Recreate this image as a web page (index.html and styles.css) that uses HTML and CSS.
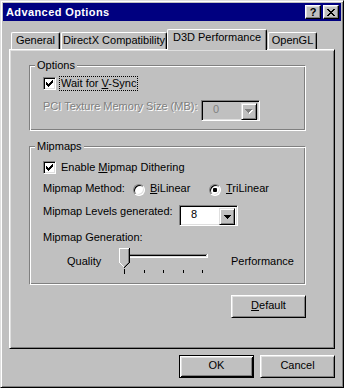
FILE: index.html
```html
<!DOCTYPE html>
<html lang="en">
<head>
<meta charset="utf-8">
<title>Advanced Options</title>
<link rel="stylesheet" href="styles.css">
</head>
<body>
<div class="window">
  <div class="titlebar">
    <span class="title">Advanced Options</span>
    <div class="cap-btns">
      <div class="cap-btn help">?</div>
      <div class="cap-btn close">
        <svg width="8" height="7" viewBox="0 0 8 7" shape-rendering="crispEdges"><path d="M0 0h2v1h-2zM6 0h2v1h-2zM1 1h2v1h-2zM5 1h2v1h-2zM2 2h4v1h-4zM3 3h2v1h-2zM2 4h4v1h-4zM1 5h2v1h-2zM5 5h2v1h-2zM0 6h2v1h-2zM6 6h2v1h-2z"/></svg>
      </div>
    </div>
  </div>

  <div class="tabs">
    <div class="tab tab-general">General</div>
    <div class="tab tab-dx">DirectX Compatibility</div>
    <div class="tab tab-d3d active">D3D Performance</div>
    <div class="tab tab-ogl">OpenGL</div>
  </div>

  <div class="panel">
    <div class="panel-body">
      <div class="group group-options">
        <span class="group-label">Options</span>
        <div class="check-row row-vsync">
          <span class="checkbox"><svg width="7" height="7" viewBox="0 0 7 7" shape-rendering="crispEdges"><path d="M0 2h1v3h-1zM1 3h1v3h-1zM2 4h1v3h-1zM3 3h1v3h-1zM4 2h1v3h-1zM5 1h1v3h-1zM6 0h1v3h-1z"/></svg></span>
          <span class="check-label focus">Wait for <u>V</u>-Sync</span>
        </div>
        <div class="field-row row-pci">
          <span class="field-label label-pci disabled">PCI Texture Memory Size (MB):</span>
          <div class="combo combo-pci is-disabled">
            <span class="combo-val">0</span>
            <span class="combo-btn"><svg width="8" height="5" viewBox="0 0 8 5" shape-rendering="crispEdges"><path class="arrow-shadow" d="M1 1h7v1h-7zM2 2h5v1h-5zM3 3h3v1h-3zM4 4h1v1h-1z"/><path class="arrow-gray" d="M0 0h7v1h-7zM1 1h5v1h-5zM2 2h3v1h-3zM3 3h1v1h-1z"/></svg></span>
          </div>
        </div>
      </div>

      <div class="group group-mip">
        <span class="group-label">Mipmaps</span>
        <div class="check-row row-dither">
          <span class="checkbox"><svg width="7" height="7" viewBox="0 0 7 7" shape-rendering="crispEdges"><path d="M0 2h1v3h-1zM1 3h1v3h-1zM2 4h1v3h-1zM3 3h1v3h-1zM4 2h1v3h-1zM5 1h1v3h-1zM6 0h1v3h-1z"/></svg></span>
          <span class="check-label">Enable <u>M</u>ipmap Dithering</span>
        </div>
        <div class="field-row row-method">
          <span class="field-label label-method">Mipmap Method:</span>
          <span class="radio-opt opt-bi"><span class="radio"></span><span class="radio-label"><u>B</u>iLinear</span></span>
          <span class="radio-opt opt-tri"><span class="radio"><span class="dot"></span></span><span class="radio-label"><u>T</u>riLinear</span></span>
        </div>
        <div class="field-row row-levels">
          <span class="field-label label-levels">Mipmap Levels generated:</span>
          <div class="combo combo-levels">
            <span class="combo-val">8</span>
            <span class="combo-btn"><svg width="7" height="4" viewBox="0 0 7 4" shape-rendering="crispEdges"><path d="M0 0h7v1h-7zM1 1h5v1h-5zM2 2h3v1h-3zM3 3h1v1h-1z"/></svg></span>
          </div>
        </div>
        <div class="row-gen">Mipmap Generation:</div>
        <div class="slider-row">
          <span class="slider-end end-quality">Quality</span>
          <svg class="trackbar" width="90" height="27" viewBox="0 0 90 27" shape-rendering="crispEdges">
            <rect x="2" y="7" width="86" height="1" fill="#808080"/>
            <rect x="2" y="8" width="85" height="1" fill="#000"/>
            <rect x="2" y="9" width="85" height="1" fill="#dfdfdf"/>
            <rect x="2" y="10" width="87" height="1" fill="#fff"/>
            <rect x="88" y="7" width="1" height="4" fill="#fff"/>
            <rect x="87" y="8" width="1" height="2" fill="#dfdfdf"/>
            <rect x="0" y="1" width="11" height="15" fill="#c0c0c0"/>
            <rect x="0" y="1" width="10" height="1" fill="#fff"/>
            <rect x="0" y="1" width="1" height="15" fill="#fff"/>
            <rect x="10" y="1" width="1" height="15" fill="#000"/>
            <rect x="9" y="2" width="1" height="14" fill="#808080"/>
            <rect x="1" y="16" width="1" height="1" fill="#fff"/>
            <rect x="2" y="16" width="6" height="1" fill="#c0c0c0"/>
            <rect x="8" y="16" width="1" height="1" fill="#808080"/>
            <rect x="9" y="16" width="1" height="1" fill="#000"/>
            <rect x="2" y="17" width="1" height="1" fill="#fff"/>
            <rect x="3" y="17" width="4" height="1" fill="#c0c0c0"/>
            <rect x="7" y="17" width="1" height="1" fill="#808080"/>
            <rect x="8" y="17" width="1" height="1" fill="#000"/>
            <rect x="3" y="18" width="1" height="1" fill="#fff"/>
            <rect x="4" y="18" width="2" height="1" fill="#c0c0c0"/>
            <rect x="6" y="18" width="1" height="1" fill="#808080"/>
            <rect x="7" y="18" width="1" height="1" fill="#000"/>
            <rect x="4" y="19" width="1" height="1" fill="#fff"/>
            <rect x="5" y="19" width="1" height="1" fill="#808080"/>
            <rect x="6" y="19" width="1" height="1" fill="#000"/>
            <rect x="5" y="20" width="1" height="1" fill="#000"/>
            <rect x="5" y="22" width="1" height="5" fill="#000"/>
            <rect x="25" y="23" width="1" height="3" fill="#000"/>
            <rect x="44" y="23" width="1" height="3" fill="#000"/>
            <rect x="64" y="23" width="1" height="3" fill="#000"/>
            <rect x="83" y="23" width="1" height="3" fill="#000"/>
          </svg>
          <span class="slider-end end-perf">Performance</span>
        </div>
      </div>

      <div class="btn btn-default"><u>D</u>efault</div>
    </div>
  </div>

  <div class="footer">
    <div class="btn btn-ok">OK</div>
    <div class="btn">Cancel</div>
  </div>
</div>
</body>
</html>
```

FILE: styles.css
```css
* { box-sizing: border-box; }
html, body { margin: 0; padding: 0; }
body {
  width: 344px;
  height: 388px;
  overflow: hidden;
  background: #c0c0c0;
  font-family: "Liberation Sans", Arial, sans-serif;
  font-size: 11px;
  line-height: 13px;
  color: #000;
}
u { text-decoration-thickness: 1px; text-underline-offset: 1px; }

.window {
  width: 344px;
  height: 388px;
  display: flex;
  flex-direction: column;
  padding: 2px;
  border: 1px solid;
  border-color: #dfdfdf #000 #000 #dfdfdf;
  box-shadow: inset 1px 1px #fff, inset -1px -1px #808080;
  background: #c0c0c0;
}

.titlebar {
  flex: none;
  height: 18px;
  display: flex;
  align-items: center;
  padding: 0 2px 0 3px;
  background: #000080;
  color: #fff;
}
.title { flex: 1; font-weight: bold; letter-spacing: 0.4px; white-space: nowrap; }
.cap-btns { display: flex; gap: 2px; }
.cap-btn {
  width: 16px;
  height: 14px;
  display: flex;
  align-items: center;
  justify-content: center;
  background: #c0c0c0;
  color: #000;
  border: 1px solid;
  border-color: #fff #000 #000 #fff;
  box-shadow: inset -1px -1px #808080, inset 1px 1px #dfdfdf;
}
.cap-btn.help { font-weight: bold; font-size: 11px; line-height: 12px; }
.cap-btn svg { display: block; fill: #000; }

.tabs {
  flex: none;
  display: flex;
  align-items: flex-end;
  height: 20px;
  margin-top: 8px;
  padding-left: 8px;
}
.tab {
  height: 17px;
  padding-top: 1px;
  text-align: center;
  white-space: nowrap;
  background: #c0c0c0;
  border-top: 1px solid #fff;
  border-left: 1px solid #fff;
  border-right: 1px solid #000;
  border-radius: 2px 2px 0 0;
  box-shadow: inset -1px 0 #808080;
}
.tab-general { width: 49px; }
.tab-dx { width: 106px; margin-left: 1px; }
.tab-d3d { width: 100px; }
.tab-ogl { width: 49px; margin-left: 1px; }
.tab.active {
  height: 21px;
  margin-bottom: -1px;
  position: relative;
  z-index: 1;
}

.panel {
  flex: none;
  width: 326px;
  height: 300px;
  margin-left: 6px;
  padding: 15px 0 0 19px;
  border: 1px solid;
  border-color: #fff #000 #000 #fff;
  box-shadow: inset 1px 1px #dfdfdf, inset -1px -1px #808080;
}
.panel-body { width: 277px; display: flex; flex-direction: column; }

.group {
  display: flex;
  flex-direction: column;
  align-items: flex-start;
  padding: 0 0 9px 13px;
  border: 1px solid;
  border-color: #808080 #fff #fff #808080;
  box-shadow: inset 1px 1px #fff, inset -1px -1px #808080;
}
.group-mip { margin-top: 15px; padding-bottom: 10px; }
.group-label {
  margin: -7px 0 0 -8px;
  padding: 0 2px;
  background: #c0c0c0;
}

.check-row { display: flex; align-items: center; height: 13px; }
.row-vsync { margin-top: 5px; }
.row-dither { margin-top: 8px; }
.checkbox {
  flex: none;
  width: 13px;
  height: 13px;
  display: flex;
  align-items: center;
  justify-content: center;
  background: #fff;
  border: 1px solid;
  border-color: #808080 #fff #fff #808080;
  box-shadow: inset 1px 1px #000, inset -1px -1px #dfdfdf;
}
.checkbox svg { display: block; fill: #000; }
.check-label { margin-left: 4px; padding: 0 1px; }
.focus { outline: 1px dotted #000; }

.field-row { display: flex; align-items: flex-start; }
.row-pci { margin-top: 10px; }
.row-method { margin-top: 8px; }
.row-levels { margin-top: 9px; }
.field-label { flex: none; white-space: nowrap; }
.label-pci { width: 158px; }
.label-method { width: 90px; }
.label-levels { width: 136px; }
.disabled { color: #808080; text-shadow: 1px 1px #fff; }

.radio-opt { display: flex; align-items: flex-start; }
.opt-bi { width: 76px; }
.radio {
  flex: none;
  width: 12px;
  height: 12px;
  margin-top: 2px;
  display: flex;
  align-items: center;
  justify-content: center;
  border-radius: 50%;
  background: #fff;
  border: 1px solid;
  border-color: #808080 #fff #fff #808080;
  box-shadow: inset 1px 1px #000, inset -1px -1px #dfdfdf;
}
.dot { width: 4px; height: 4px; border-radius: 1px; background: #000; }
.radio-label { margin-left: 5px; }

.combo {
  flex: none;
  width: 59px;
  height: 21px;
  display: flex;
  padding: 2px;
  background: #fff;
  border: 1px solid;
  border-color: #808080 #fff #fff #808080;
  box-shadow: inset 1px 1px #000, inset -1px -1px #dfdfdf;
}
.combo.is-disabled { background: #c0c0c0; color: #808080; }
.combo-val { flex: 1; padding-left: 9px; }
.combo-btn {
  flex: none;
  width: 16px;
  height: 17px;
  display: flex;
  align-items: center;
  justify-content: center;
  background: #c0c0c0;
  border: 1px solid;
  border-color: #dfdfdf #000 #000 #dfdfdf;
  box-shadow: inset 1px 1px #fff, inset -1px -1px #808080;
}
.combo-btn svg { display: block; fill: #000; }
.combo-btn .arrow-shadow { fill: #fff; }
.combo-btn .arrow-gray { fill: #808080; }

.row-gen { margin-top: 5px; }
.slider-row { display: flex; align-items: flex-start; margin-top: 3px; }
.end-quality { flex: none; width: 52px; margin-left: 24px; margin-top: 8px; }
.trackbar { display: block; flex: none; }
.end-perf { margin-left: 22px; margin-top: 8px; }

.btn {
  flex: none;
  width: 75px;
  height: 23px;
  display: flex;
  align-items: center;
  justify-content: center;
  padding-bottom: 2px;
  background: #c0c0c0;
  border: 1px solid;
  border-color: #fff #000 #000 #fff;
  box-shadow: inset 1px 1px #dfdfdf, inset -1px -1px #808080;
}
.btn-default { align-self: flex-end; margin-top: 10px; }
.btn-ok {
  border-color: #000;
  box-shadow: inset 1px 1px #fff, inset -1px -1px #000, inset 2px 2px #dfdfdf, inset -2px -2px #808080;
}

.footer {
  flex: none;
  display: flex;
  justify-content: flex-end;
  gap: 6px;
  margin-top: 6px;
  padding-right: 6px;
}
```
